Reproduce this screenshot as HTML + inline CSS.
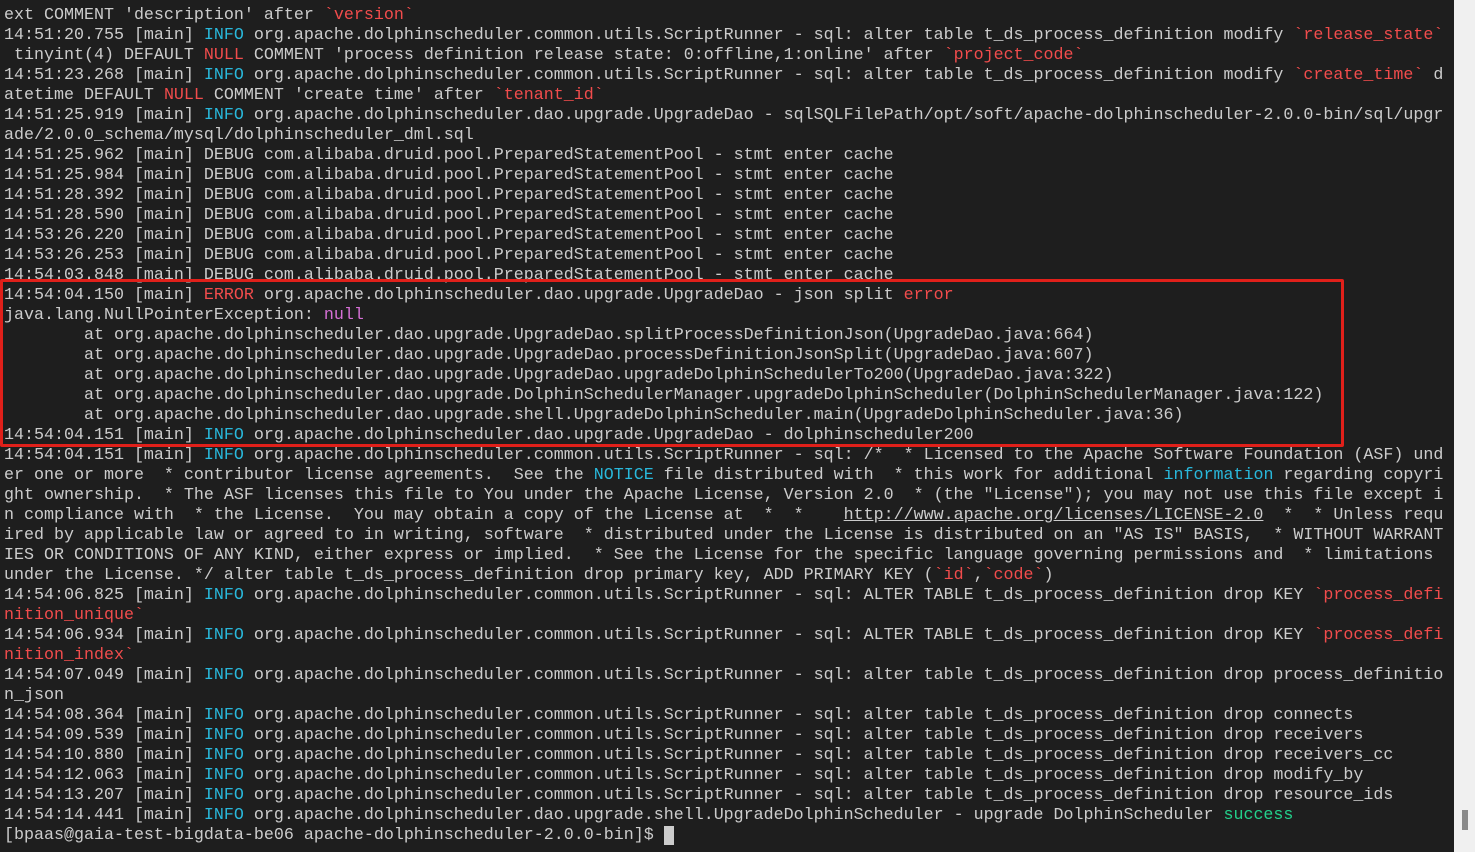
<!DOCTYPE html>
<html><head><meta charset="utf-8"><style>
html,body{margin:0;padding:0;width:1475px;height:852px;overflow:hidden;background:#f0f0f0}
#t{position:absolute;left:0;top:0;width:1454px;height:852px;background:#1e1e1e;overflow:hidden}
pre{margin:0;position:absolute;left:4px;top:6px;font-family:"Liberation Mono",monospace;font-size:16.67px;line-height:20px;color:#cccccc;white-space:pre}
.i{color:#29b8db}.e{color:#f14c4c}.r{color:#f14c4c}.m{color:#d670d6}.g{color:#23d18b}.b{color:#29b8db}
u{text-decoration:underline}
#box{position:absolute;left:0;top:279px;width:1338px;height:162px;border:3px solid #e0201a;border-radius:2px}
#thumb{position:absolute;left:1462px;top:810px;width:6px;height:20px;background:#8a8a8a}
.cur{background:#cccccc;color:#1e1e1e}
</style></head><body><div id="t"><pre>ext COMMENT 'description' after <span class="r">`version`</span>
14:51:20.755 [main] <span class="i">INFO</span> org.apache.dolphinscheduler.common.utils.ScriptRunner - sql: alter table t_ds_process_definition modify <span class="r">`release_state`</span>
 tinyint(4) DEFAULT <span class="r">NULL</span> COMMENT 'process definition release state: 0:offline,1:online' after <span class="r">`project_code`</span>
14:51:23.268 [main] <span class="i">INFO</span> org.apache.dolphinscheduler.common.utils.ScriptRunner - sql: alter table t_ds_process_definition modify <span class="r">`create_time`</span> d
atetime DEFAULT <span class="r">NULL</span> COMMENT 'create time' after <span class="r">`tenant_id`</span>
14:51:25.919 [main] <span class="i">INFO</span> org.apache.dolphinscheduler.dao.upgrade.UpgradeDao - sqlSQLFilePath/opt/soft/apache-dolphinscheduler-2.0.0-bin/sql/upgr
ade/2.0.0_schema/mysql/dolphinscheduler_dml.sql
14:51:25.962 [main] DEBUG com.alibaba.druid.pool.PreparedStatementPool - stmt enter cache
14:51:25.984 [main] DEBUG com.alibaba.druid.pool.PreparedStatementPool - stmt enter cache
14:51:28.392 [main] DEBUG com.alibaba.druid.pool.PreparedStatementPool - stmt enter cache
14:51:28.590 [main] DEBUG com.alibaba.druid.pool.PreparedStatementPool - stmt enter cache
14:53:26.220 [main] DEBUG com.alibaba.druid.pool.PreparedStatementPool - stmt enter cache
14:53:26.253 [main] DEBUG com.alibaba.druid.pool.PreparedStatementPool - stmt enter cache
14:54:03.848 [main] DEBUG com.alibaba.druid.pool.PreparedStatementPool - stmt enter cache
14:54:04.150 [main] <span class="e">ERROR</span> org.apache.dolphinscheduler.dao.upgrade.UpgradeDao - json split <span class="e">error</span>
java.lang.NullPointerException: <span class="m">null</span>
        at org.apache.dolphinscheduler.dao.upgrade.UpgradeDao.splitProcessDefinitionJson(UpgradeDao.java:664)
        at org.apache.dolphinscheduler.dao.upgrade.UpgradeDao.processDefinitionJsonSplit(UpgradeDao.java:607)
        at org.apache.dolphinscheduler.dao.upgrade.UpgradeDao.upgradeDolphinSchedulerTo200(UpgradeDao.java:322)
        at org.apache.dolphinscheduler.dao.upgrade.DolphinSchedulerManager.upgradeDolphinScheduler(DolphinSchedulerManager.java:122)
        at org.apache.dolphinscheduler.dao.upgrade.shell.UpgradeDolphinScheduler.main(UpgradeDolphinScheduler.java:36)
14:54:04.151 [main] <span class="i">INFO</span> org.apache.dolphinscheduler.dao.upgrade.UpgradeDao - dolphinscheduler200
14:54:04.151 [main] <span class="i">INFO</span> org.apache.dolphinscheduler.common.utils.ScriptRunner - sql: /*  * Licensed to the Apache Software Foundation (ASF) und
er one or more  * contributor license agreements.  See the <span class="b">NOTICE</span> file distributed with  * this work for additional <span class="b">information</span> regarding copyri
ght ownership.  * The ASF licenses this file to You under the Apache License, Version 2.0  * (the "License"); you may not use this file except i
n compliance with  * the License.  You may obtain a copy of the License at  *  *    <u>http://www.apache.org/licenses/LICENSE-2.0</u>  *  * Unless requ
ired by applicable law or agreed to in writing, software  * distributed under the License is distributed on an "AS IS" BASIS,  * WITHOUT WARRANT
IES OR CONDITIONS OF ANY KIND, either express or implied.  * See the License for the specific language governing permissions and  * limitations
under the License. */ alter table t_ds_process_definition drop primary key, ADD PRIMARY KEY (<span class="r">`id`</span>,<span class="r">`code`</span>)
14:54:06.825 [main] <span class="i">INFO</span> org.apache.dolphinscheduler.common.utils.ScriptRunner - sql: ALTER TABLE t_ds_process_definition drop KEY <span class="r">`process_defi</span>
<span class="r">nition_unique`</span>
14:54:06.934 [main] <span class="i">INFO</span> org.apache.dolphinscheduler.common.utils.ScriptRunner - sql: ALTER TABLE t_ds_process_definition drop KEY <span class="r">`process_defi</span>
<span class="r">nition_index`</span>
14:54:07.049 [main] <span class="i">INFO</span> org.apache.dolphinscheduler.common.utils.ScriptRunner - sql: alter table t_ds_process_definition drop process_definitio
n_json
14:54:08.364 [main] <span class="i">INFO</span> org.apache.dolphinscheduler.common.utils.ScriptRunner - sql: alter table t_ds_process_definition drop connects
14:54:09.539 [main] <span class="i">INFO</span> org.apache.dolphinscheduler.common.utils.ScriptRunner - sql: alter table t_ds_process_definition drop receivers
14:54:10.880 [main] <span class="i">INFO</span> org.apache.dolphinscheduler.common.utils.ScriptRunner - sql: alter table t_ds_process_definition drop receivers_cc
14:54:12.063 [main] <span class="i">INFO</span> org.apache.dolphinscheduler.common.utils.ScriptRunner - sql: alter table t_ds_process_definition drop modify_by
14:54:13.207 [main] <span class="i">INFO</span> org.apache.dolphinscheduler.common.utils.ScriptRunner - sql: alter table t_ds_process_definition drop resource_ids
14:54:14.441 [main] <span class="i">INFO</span> org.apache.dolphinscheduler.dao.upgrade.shell.UpgradeDolphinScheduler - upgrade DolphinScheduler <span class="g">success</span>
[bpaas@gaia-test-bigdata-be06 apache-dolphinscheduler-2.0.0-bin]$ <span class="cur"> </span></pre>
<div id="box"></div></div><div id="thumb"></div></body></html>
